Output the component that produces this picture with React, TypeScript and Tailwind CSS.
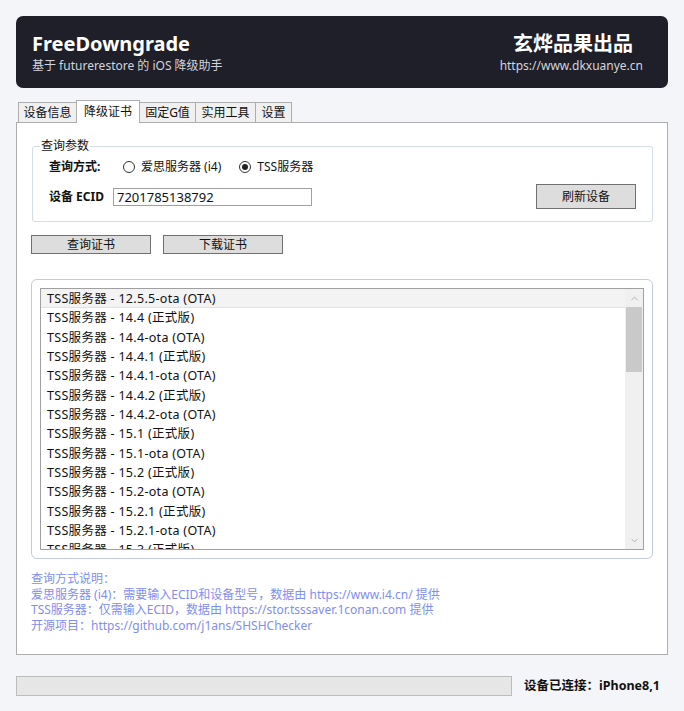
import { ChevronUp, ChevronDown } from "lucide-react";

const versions = [
  "12.5.5-ota (OTA)",
  "14.4 (正式版)",
  "14.4-ota (OTA)",
  "14.4.1 (正式版)",
  "14.4.1-ota (OTA)",
  "14.4.2 (正式版)",
  "14.4.2-ota (OTA)",
  "15.1 (正式版)",
  "15.1-ota (OTA)",
  "15.2 (正式版)",
  "15.2-ota (OTA)",
  "15.2.1 (正式版)",
  "15.2.1-ota (OTA)",
  "15.3 (正式版)",
];

const tabs = [
  { label: "设备信息", w: "w-[59px]" },
  { label: "降级证书", w: "w-[64px]", active: true },
  { label: "固定G值", w: "w-[57px]" },
  { label: "实用工具", w: "w-[61px]" },
  { label: "设置", w: "w-[37px]" },
];

const font = "font-['Noto_Sans','Noto_Sans_CJK_SC',sans-serif]";

const Radio = ({ checked, label }: { checked?: boolean; label: string }) => (
  <div className="flex items-center gap-[6px]">
    <span className="w-[12px] h-[12px] rounded-full border border-[#333] bg-white flex items-center justify-center">
      {checked && <span className="w-[6px] h-[6px] rounded-full bg-[#222]" />}
    </span>
    <span>{label}</span>
  </div>
);

export default function App() {
  return (
    <div
      className={`w-[684px] h-[711px] bg-[#f4f5f9] pt-4 px-4 flex flex-col text-[12px] text-[#111] ${font}`}
    >
      {/* Header */}
      <div className="h-[72px] rounded-[7px] bg-[#1e1f29] flex justify-between items-center pl-4 pr-[25px] pt-[2px]">
        <div className="flex flex-col">
          <span className="text-[20px] font-bold text-white leading-[24px]">FreeDowngrade</span>
          <span className="text-[12px] text-[#d4d4dc] leading-[16px] mt-[2px]">基于 futurerestore 的 iOS 降级助手</span>
        </div>
        <div className="flex flex-col items-end">
          <span className="text-[20px] font-bold text-white leading-[24px] mr-[10px]">玄烨品果出品</span>
          <span className="text-[12px] text-[#d4d4dc] leading-[16px] mt-[2px]">https://www.dkxuanye.cn</span>
        </div>
      </div>

      {/* Tabs */}
      <div className="mt-[12px] flex items-end pl-[2px] h-[22px]">
        {tabs.map((t, i) =>
          t.active ? (
            <div
              key={t.label}
              className={`${t.w} h-[23px] -mb-px -ml-px relative z-10 bg-white border border-b-0 border-[#adadad] flex items-center justify-center`}
            >
              {t.label}
            </div>
          ) : (
            <div
              key={t.label}
              className={`${t.w} h-[20px] ${i > 0 ? "-ml-px" : ""} bg-[#f0f0f0] border border-b-0 border-[#adadad] flex items-center justify-center`}
            >
              {t.label}
            </div>
          ),
        )}
      </div>

      {/* Panel */}
      <div className="h-[533px] bg-white border border-[#adadad] pl-[14px] pr-[14px] pt-[23px]">
        {/* Group box */}
        <div className="relative ml-px border border-[#d4dce6] rounded-[3px] pt-[10px] pb-[12px] pl-4 pr-4">
          <span className="absolute -top-[9px] left-[7px] bg-white px-px leading-[16px]">查询参数</span>
          <div className="flex items-center h-[20px]">
            <span className="font-bold w-[74px]">查询方式:</span>
            <div className="flex items-center gap-[18px]">
              <Radio label="爱思服务器 (i4)" />
              <Radio label="TSS服务器" checked />
            </div>
          </div>
          <div className="flex items-center h-[25px] mt-[7px]">
            <span className="font-bold w-[64px]">设备 ECID</span>
            <div className="w-[199px] h-[18px] border border-[#a0a0a0] px-[3px] leading-[16px] text-[13px]">
              7201785138792
            </div>
            <div className="ml-auto w-[100px] h-[25px] bg-[#dddddd] border border-[#707070] flex items-center justify-center">
              刷新设备
            </div>
          </div>
        </div>

        {/* Buttons */}
        <div className="flex gap-[12px] mt-[13px]">
          <div className="w-[120px] h-[19px] bg-[#dddddd] border border-[#707070] flex items-center justify-center">
            查询证书
          </div>
          <div className="w-[120px] h-[19px] bg-[#dddddd] border border-[#707070] flex items-center justify-center">
            下载证书
          </div>
        </div>

        {/* List group */}
        <div className="mt-[25px] h-[280px] border border-[#c4cadb] rounded-[6px] p-[8px]">
          <div className="h-full border border-[#a0a0a0] flex overflow-hidden">
            <div className="flex-1 flex flex-col overflow-hidden">
              {versions.map((v, i) => (
                <div
                  key={v}
                  className={`shrink-0 h-[19.33px] leading-[19px] pl-[6px] whitespace-nowrap text-[12.5px] tracking-[0.3px] ${
                    i === 0 ? "bg-[#f3f3f3] border-b border-[#e2e2e2]" : ""
                  }`}
                >
                  TSS服务器 - {v}
                </div>
              ))}
            </div>
            <div className="w-[18px] bg-[#f0f0f0] flex flex-col">
              <div className="h-[18px] flex items-center justify-center text-[#9a9a9a]">
                <ChevronUp size={11} strokeWidth={1.5} />
              </div>
              <div className="h-[65px] bg-[#c9c9c9] mx-px" />
              <div className="flex-1" />
              <div className="h-[18px] flex items-center justify-center text-[#9a9a9a]">
                <ChevronDown size={11} strokeWidth={1.5} />
              </div>
            </div>
          </div>
        </div>

        {/* Notes */}
        <div className="mt-[12px] text-[#7f8ef0] leading-[15.7px]">
          <div>查询方式说明：</div>
          <div>爱思服务器 (i4)：需要输入ECID和设备型号，数据由 https://www.i4.cn/ 提供</div>
          <div>TSS服务器：仅需输入ECID，数据由 https://stor.tsssaver.1conan.com 提供</div>
          <div>开源项目：https://github.com/j1ans/SHSHChecker</div>
        </div>
      </div>

      {/* Status bar */}
      <div className="mt-[21px] flex items-center">
        <div className="w-[496px] h-[20px] bg-[#e6e6e6] border border-[#bcbcbc]" />
        <span className="ml-[12px] font-bold text-[12.5px]">设备已连接：iPhone8,1</span>
      </div>
    </div>
  );
}
